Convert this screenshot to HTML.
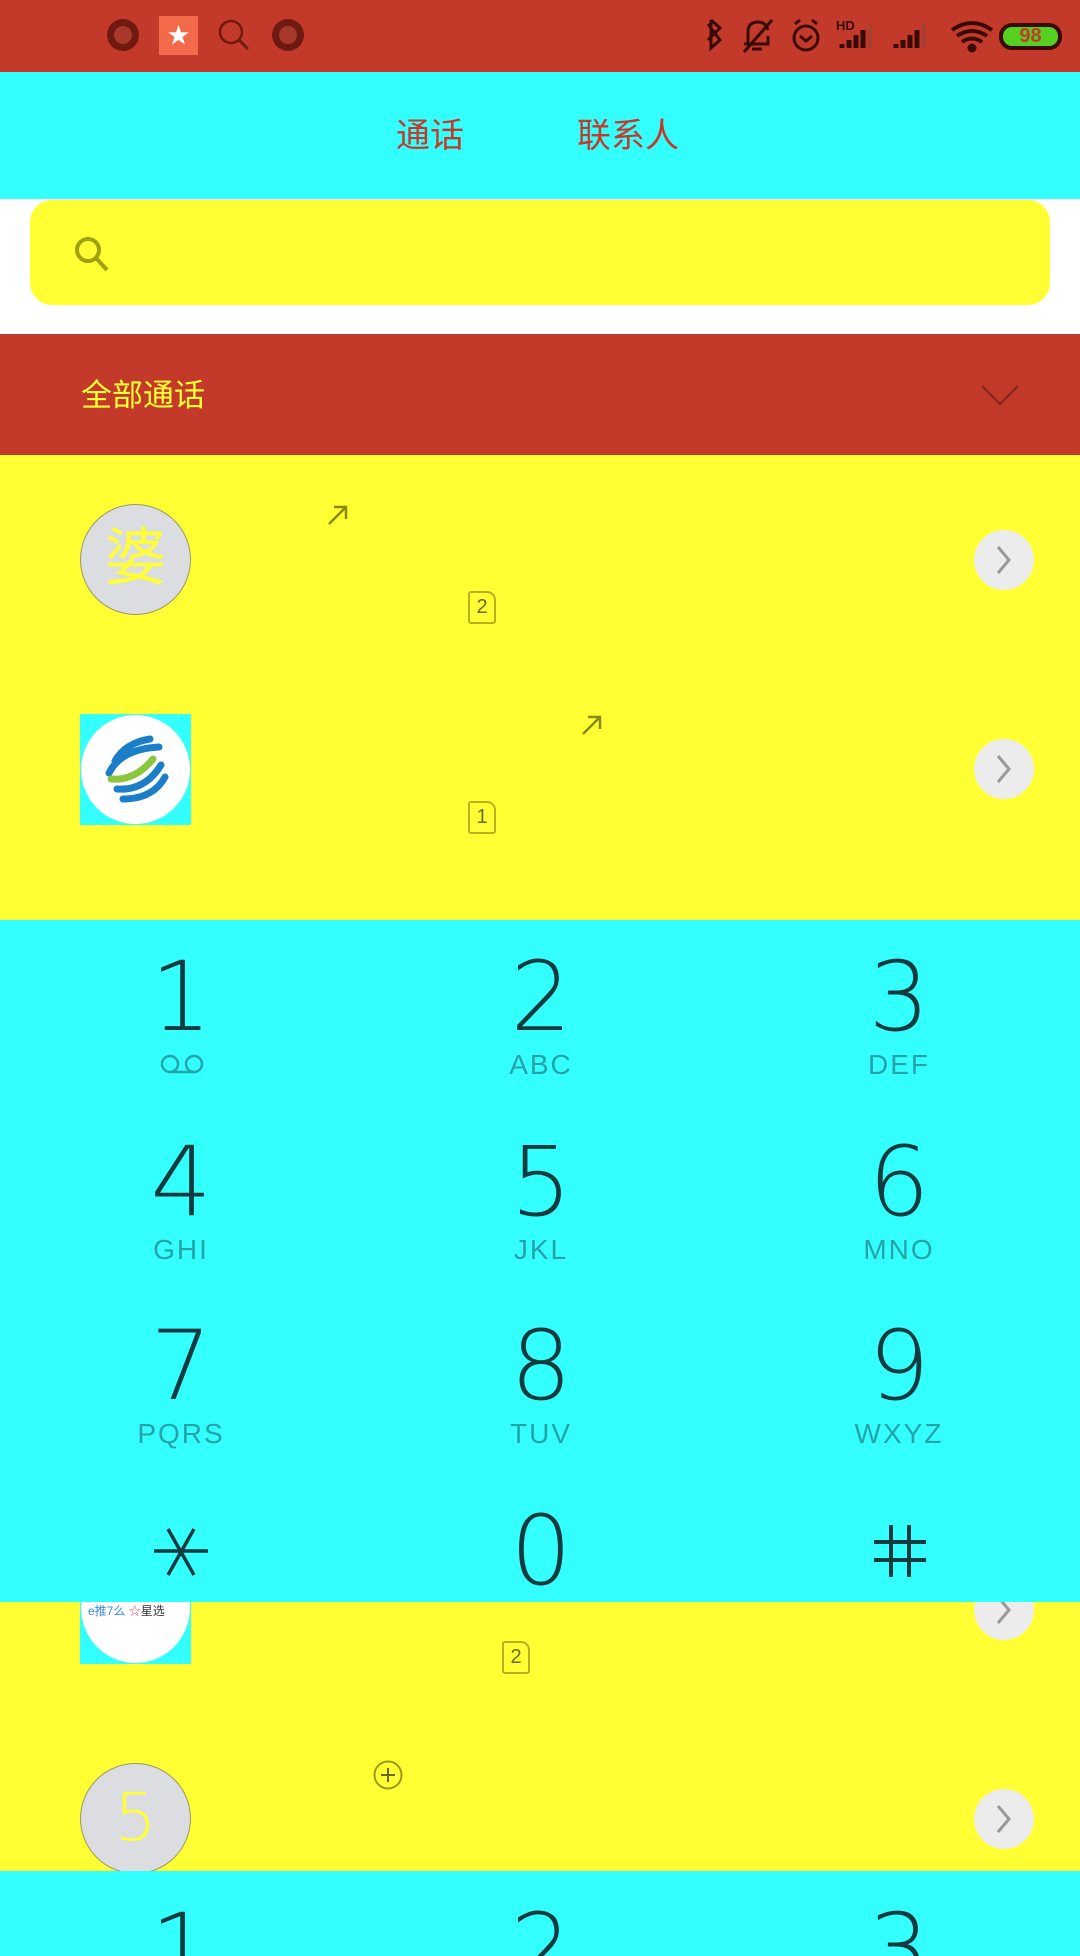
<!DOCTYPE html>
<html><head><meta charset="utf-8"><style>
*{margin:0;padding:0;box-sizing:border-box}
body{width:1080px;height:1956px;position:relative;overflow:hidden;background:#fff;font-family:"Liberation Sans","Noto Sans CJK SC",sans-serif}
.a{position:absolute}
.dig{position:absolute;width:200px;text-align:center;font-family:"DejaVu Sans ExtraLight","DejaVu Sans","Liberation Sans",sans-serif;font-weight:200;font-size:96px;line-height:96px;color:#133b3f}
.let{position:absolute;width:200px;text-align:center;font-size:28px;letter-spacing:2px;color:#24a3a8;line-height:30px}
.chev{position:absolute;width:60px;height:60px;border-radius:50%;background:#ececec}
.sim{position:absolute;width:28px;height:33px;border:2px solid #b8b020;border-radius:3px 9px 3px 3px;font-size:20px;color:#6a6a10;text-align:center;line-height:29px}
</style></head><body>
<!-- status bar -->
<div class="a" style="left:0;top:0;width:1080px;height:72px;background:#c43a2a"></div>
<div class="a" style="left:107px;top:19px;width:32px;height:32px;border-radius:50%;background:#6e1a10"><div class="a" style="left:7px;top:7px;width:18px;height:18px;border-radius:50%;background:#a8382a"></div></div>
<div class="a" style="left:159px;top:16px;width:39px;height:39px;background:#f26a4a;color:#fff;font-size:22px;text-align:center;line-height:39px">★</div>
<svg class="a" style="left:216px;top:17px" width="36" height="36"><circle cx="15" cy="15" r="11" fill="none" stroke="#6e1a10" stroke-width="2.5"/><line x1="23" y1="23" x2="32" y2="32" stroke="#6e1a10" stroke-width="3"/></svg>
<div class="a" style="left:272px;top:19px;width:32px;height:32px;border-radius:50%;background:#6e1a10"><div class="a" style="left:7px;top:7px;width:18px;height:18px;border-radius:50%;background:#a8382a"></div></div>
<svg class="a" style="left:700px;top:16px" width="300" height="42" fill="none" stroke="#3a0a06" stroke-width="3">
<path d="M11 4 L20 12 L8 24 M8 8 L20 24 L11 32 L11 4"/>
<path d="M48 28 L48 16 Q48 6 58 6 Q66 6 68 14 M68 20 L68 28 L44 28 M52 33 L62 33 M44 36 L72 4"/>
<circle cx="106" cy="22" r="12"/><path d="M100 20 L106 25 L112 20 M95 8 L100 4 M117 8 L112 4"/>
<text x="136" y="14" font-size="13" font-weight="bold" fill="#3a0a06" stroke="none" font-family="Liberation Sans">HD</text>
<path d="M142 32 L142 28 M149 32 L149 24 M156 32 L156 19 M163 32 L163 14" stroke-width="5"/><path d="M170 32 L170 8" stroke="#a84030" stroke-width="4"/>
<path d="M196 32 L196 28 M203 32 L203 24 M210 32 L210 19 M217 32 L217 14" stroke-width="5"/><path d="M224 32 L224 8" stroke="#a84030" stroke-width="4"/>
<path d="M252 14 Q272 0 292 14 M257 20 Q272 10 287 20 M262 26 Q272 19 282 26" stroke-width="4"/><circle cx="272" cy="32" r="3" fill="#3a0a06"/>
</svg>
<div class="a" style="left:999px;top:23px;width:63px;height:27px;border-radius:13px;border:4px solid #3a0a06;background:#55d021;color:#c43a2a;font-size:20px;text-align:center;line-height:19px;font-weight:bold">98</div>
<!-- tabs -->
<div class="a" style="left:0;top:72px;width:1080px;height:127px;background:#33ffff"></div>
<div class="a" style="left:396px;top:114px;font-size:34px;color:#c43a2a;line-height:44px">通话</div>
<div class="a" style="left:577px;top:114px;font-size:34px;color:#c43a2a;line-height:44px">联系人</div>
<!-- search -->
<div class="a" style="left:30px;top:200px;width:1020px;height:105px;border-radius:22px;background:#ffff33"></div>
<svg class="a" style="left:72px;top:234px" width="40" height="40"><circle cx="16" cy="16" r="11" fill="none" stroke="#a0a010" stroke-width="4"/><line x1="24" y1="24" x2="35" y2="36" stroke="#a0a010" stroke-width="4"/></svg>
<!-- red header -->
<div class="a" style="left:0;top:334px;width:1080px;height:121px;background:#c43a2a"></div>
<div class="a" style="left:81px;top:376px;font-size:31px;color:#ffff33;line-height:40px">全部通话</div>
<svg class="a" style="left:980px;top:384px" width="40" height="24"><path d="M2 2 L20 20 L38 2" fill="none" stroke="#8a2a1a" stroke-width="2.5"/></svg>
<!-- list -->
<div class="a" style="left:0;top:455px;width:1080px;height:465px;background:#ffff33"></div>
<div class="a" style="left:80px;top:504px;width:111px;height:111px;border-radius:50%;background:#dcdde0;border:1px solid #9a9a60;color:#ffff33;font-size:62px;text-align:center;line-height:108px">婆</div>
<svg class="a" style="left:326px;top:503px" width="24" height="24"><path d="M3 21 L20 4 M8 4 L20 4 L20 16" fill="none" stroke="#8a8a10" stroke-width="2.5"/></svg>
<div class="sim" style="left:468px;top:591px">2</div>
<div class="chev" style="left:974px;top:530px"></div>
<svg class="a" style="left:994px;top:544px" width="20" height="32"><path d="M4 3 L15 16 L4 29" fill="none" stroke="#999" stroke-width="3"/></svg>
<div class="a" style="left:80px;top:714px;width:111px;height:111px;background:#33ffff"><div class="a" style="left:1px;top:1px;width:109px;height:109px;border-radius:50%;background:#fff"></div>
<svg class="a" style="left:15px;top:15px" width="80" height="80" fill="none" stroke-width="7" stroke-linecap="round"><path d="M20 32 Q30 14 55 10" stroke="#1a7fc8"/><path d="M14 44 Q26 20 64 18" stroke="#1a7fc8"/><path d="M16 50 Q40 52 58 30" stroke="#8cc63f"/><path d="M22 60 Q50 62 66 36" stroke="#1a7fc8"/><path d="M28 70 Q58 70 70 48" stroke="#1a7fc8"/></svg></div>
<svg class="a" style="left:580px;top:713px" width="24" height="24"><path d="M3 21 L20 4 M8 4 L20 4 L20 16" fill="none" stroke="#8a8a10" stroke-width="2.5"/></svg>
<div class="sim" style="left:468px;top:801px">1</div>
<div class="chev" style="left:974px;top:739px"></div>
<svg class="a" style="left:994px;top:753px" width="20" height="32"><path d="M4 3 L15 16 L4 29" fill="none" stroke="#999" stroke-width="3"/></svg>
<!-- lower list -->
<div class="a" style="left:0;top:1602px;width:1080px;height:270px;background:#ffff33"></div>
<div class="a" style="left:80px;top:1560px;width:111px;height:104px;background:#33ffff;overflow:hidden"><div class="a" style="left:1px;top:-8px;width:109px;height:111px;border-radius:50%;background:#fff"></div><div class="a" style="left:8px;top:42px;font-size:12px;color:#3a8ad8">e推7么 <span style="color:#e04060">☆</span><span style="color:#333">星选</span></div></div>
<div class="chev" style="left:974px;top:1580px"></div>
<svg class="a" style="left:994px;top:1594px" width="20" height="32"><path d="M4 3 L15 16 L4 29" fill="none" stroke="#999" stroke-width="3"/></svg>
<div class="sim" style="left:502px;top:1641px">2</div>
<svg class="a" style="left:372px;top:1759px" width="32" height="32"><circle cx="16" cy="16" r="13.5" fill="none" stroke="#9a9a10" stroke-width="2"/><path d="M16 9 L16 23 M9 16 L23 16" stroke="#6a6a10" stroke-width="2"/></svg>
<div class="a" style="left:80px;top:1763px;width:111px;height:111px;border-radius:50%;background:#dcdde0;border:1px solid #9a9a60;color:#ffff33;font-size:66px;text-align:center;line-height:108px;font-family:'DejaVu Sans',sans-serif;font-weight:200">5</div>
<div class="chev" style="left:974px;top:1789px"></div>
<svg class="a" style="left:994px;top:1803px" width="20" height="32"><path d="M4 3 L15 16 L4 29" fill="none" stroke="#999" stroke-width="3"/></svg>
<!-- keypad -->
<div class="a" style="left:0;top:920px;width:1080px;height:682px;background:#33ffff"></div>
<div class="dig" style="left:81px;top:949px">1</div>
<svg class="a" style="left:159px;top:1054px" width="46" height="22"><circle cx="11" cy="10" r="8" fill="none" stroke="#24a3a8" stroke-width="2.5"/><circle cx="35" cy="10" r="8" fill="none" stroke="#24a3a8" stroke-width="2.5"/><line x1="11" y1="18" x2="35" y2="18" stroke="#24a3a8" stroke-width="2.5"/></svg>
<div class="dig" style="left:441px;top:949px">2</div><div class="let" style="left:441px;top:1050px">ABC</div>
<div class="dig" style="left:799px;top:949px">3</div><div class="let" style="left:799px;top:1050px">DEF</div>
<div class="dig" style="left:81px;top:1134px">4</div><div class="let" style="left:81px;top:1235px">GHI</div>
<div class="dig" style="left:441px;top:1134px">5</div><div class="let" style="left:441px;top:1235px">JKL</div>
<div class="dig" style="left:799px;top:1134px">6</div><div class="let" style="left:799px;top:1235px">MNO</div>
<div class="dig" style="left:81px;top:1318px">7</div><div class="let" style="left:81px;top:1419px">PQRS</div>
<div class="dig" style="left:441px;top:1318px">8</div><div class="let" style="left:441px;top:1419px">TUV</div>
<div class="dig" style="left:799px;top:1318px">9</div><div class="let" style="left:799px;top:1419px">WXYZ</div>
<svg class="a" style="left:154px;top:1527px" width="56" height="50" stroke="#133b3f" stroke-width="3.5" fill="none"><path d="M0 24 L54 24 M14 2 L40 48 M40 2 L14 48"/></svg>
<div class="dig" style="left:441px;top:1503px">0</div>
<svg class="a" style="left:872px;top:1523px" width="56" height="56" stroke="#133b3f" stroke-width="4" fill="none"><path d="M19 2 L19 54 M37 2 L37 54 M2 19 L54 19 M2 37 L54 37"/></svg>
<!-- bottom keypad -->
<div class="a" style="left:0;top:1871px;width:1080px;height:85px;background:#33ffff;overflow:hidden">
<div class="dig" style="left:81px;top:30px">1</div><div class="dig" style="left:441px;top:30px">2</div><div class="dig" style="left:799px;top:30px">3</div>
</div>
</body></html>
